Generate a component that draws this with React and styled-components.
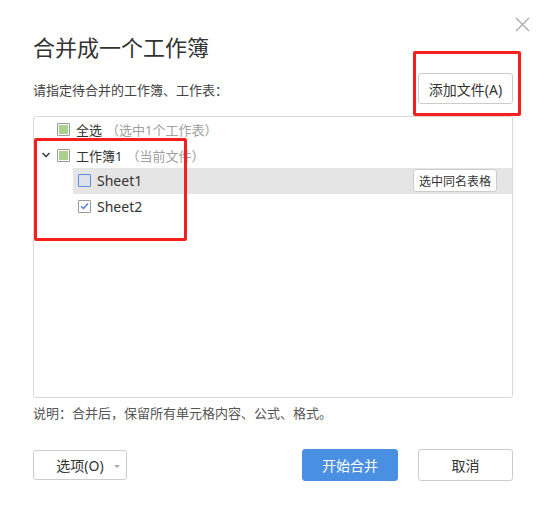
import React from 'react';
import styled, {createGlobalStyle} from 'styled-components';

const GlobalStyle = createGlobalStyle`
    html, body {
        margin: 0;
        padding: 0;
        background: #fff;
    }
    body {
        font-family: "Noto Sans", "Noto Sans CJK SC", sans-serif;
        color: #333;
    }
`;

const Dialog = styled.div`
    position: relative;
    width: 546px;
    height: 513px;
    box-sizing: border-box;
    padding: 32px 33px 0 33px;
    background: #fff;
    display: flex;
    flex-direction: column;
`;

const Close = styled.button`
    position: absolute;
    top: 16px;
    right: 16px;
    width: 16px;
    height: 16px;
    padding: 0;
    border: none;
    background: none;
    display: flex;
    align-items: center;
    justify-content: center;
`;

const Title = styled.h1`
    margin: 0;
    font-size: 22px;
    font-weight: 400;
    line-height: 30px;
    color: #333;
`;

const HeaderRow = styled.div`
    margin-top: 11px;
    height: 31px;
    display: flex;
    align-items: center;
    justify-content: space-between;
`;

const Hint = styled.span`
    font-size: 13px;
    color: #444;
    margin-top: 2px;
`;

const Button = styled.button`
    box-sizing: border-box;
    height: ${p => p.$h || 32}px;
    width: ${p => p.$w}px;
    padding: 0;
    font-family: inherit;
    font-size: ${p => p.$size || 14}px;
    color: ${p => p.$primary ? '#fff' : '#333'};
    background: ${p => p.$primary ? '#4a90e2' : '#fff'};
    border: 1px solid ${p => p.$primary ? '#4a90e2' : '#ccc'};
    border-radius: 3px;
    display: flex;
    align-items: center;
    justify-content: center;
    position: relative;
`;

const Tree = styled.div`
    margin-top: 12px;
    height: 282px;
    box-sizing: border-box;
    border: 1px solid #d9d9d9;
    border-radius: 3px;
    display: flex;
    flex-direction: column;
`;

const Row = styled.div`
    height: 25.5px;
    flex-shrink: 0;
    display: flex;
    align-items: center;
    gap: 6px;
    font-size: 13px;
    color: #333;
    padding-left: ${p => p.$indent}px;
    margin-left: ${p => p.$offset || 0}px;
    background: ${p => p.$active ? '#e5e5e5' : 'transparent'};
    padding-right: 15px;
`;

const Toggle = styled.span`
    width: 23px;
    margin-right: -6px;
    display: flex;
    align-items: center;
    justify-content: center;
`;

const Box = styled.span`
    width: 13px;
    height: 13px;
    box-sizing: border-box;
    border: 1px solid ${p => p.$focus ? '#5b8de0' : '#9a9a9a'};
    background: ${p => p.$focus ? '#dde2ea' : '#fff'};
    border-radius: 1px;
    display: flex;
    align-items: center;
    justify-content: center;
    flex-shrink: 0;
`;

const Fill = styled.span`
    width: 9px;
    height: 9px;
    background: #a9d18e;
`;

const Muted = styled.span`
    color: #a0a0a0;
    margin-left: 4px;
`;

const SheetName = styled.span`
    font-size: 14px;
    flex: 1;
`;

const Note = styled.p`
    margin: 6px 0 0 0;
    font-size: 13px;
    line-height: 18px;
    color: #555;
`;

const Footer = styled.div`
    margin-top: 27px;
    display: flex;
    align-items: center;
    gap: 20px;
`;

const Spacer = styled.div`
    flex: 1;
`;

const Caret = styled.span`
    position: absolute;
    right: 6px;
    top: 14px;
    width: 0;
    height: 0;
    border-left: 3px solid transparent;
    border-right: 3px solid transparent;
    border-top: 3px solid #aaa;
`;

const Mark = styled.div`
    position: absolute;
    left: ${p => p.$x}px;
    top: ${p => p.$y}px;
    width: ${p => p.$w}px;
    height: ${p => p.$h}px;
    box-sizing: border-box;
    border: 3px solid #f5201c;
    border-radius: 2px;
    pointer-events: none;
`;

const Check = ({state, focus}) => (
    <Box $focus={focus}>
        {state === 'partial' && <Fill/>}
        {state === 'checked' && (
            <svg width="9" height="8" viewBox="0 0 9 8">
                <path d="M1 4.2 L3.5 6.5 L8 1.5" fill="none" stroke="#4a7fd4" strokeWidth="1.4"/>
            </svg>
        )}
    </Box>
);

const sheets = [
    {name: 'Sheet1', state: 'none', active: true},
    {name: 'Sheet2', state: 'checked', active: false},
];

const App = () => {
    return (
        <Dialog>
            <GlobalStyle/>
            <Close aria-label="close">
                <svg width="15" height="15" viewBox="0 0 15 15">
                    <path d="M1 1 L14 14 M14 1 L1 14" stroke="#a8a8a8" strokeWidth="1.2"/>
                </svg>
            </Close>
            <Title>合并成一个工作簿</Title>
            <HeaderRow>
                <Hint>请指定待合并的工作簿、工作表：</Hint>
                <Button $w={95} $h={31}>添加文件(A)</Button>
            </HeaderRow>
            <Tree>
                <Row $indent={23}>
                    <Check state="partial"/>
                    <span>全选<Muted>（选中1个工作表）</Muted></span>
                </Row>
                <Row $indent={0}>
                    <Toggle>
                        <svg width="10" height="6" viewBox="0 0 10 6">
                            <path d="M1.5 1 L5 4.5 L8.5 1" fill="none" stroke="#444" strokeWidth="1.6"/>
                        </svg>
                    </Toggle>
                    <Check state="partial"/>
                    <span>工作簿1<Muted>（当前文件）</Muted></span>
                </Row>
                {sheets.map(s => (
                    <Row key={s.name} $offset={39} $indent={5} $active={s.active}>
                        <Check state={s.state} focus={s.active}/>
                        <SheetName>{s.name}</SheetName>
                        {s.active && <Button $w={84} $h={23} $size={12}>选中同名表格</Button>}
                    </Row>
                ))}
            </Tree>
            <Note>说明：合并后，保留所有单元格内容、公式、格式。</Note>
            <Footer>
                <Button $w={94} $h={30}>选项(O)<Caret/></Button>
                <Spacer/>
                <Button $w={96} $primary>开始合并</Button>
                <Button $w={95}>取消</Button>
            </Footer>
            <Mark $x={413} $y={51} $w={108} $h={65}/>
            <Mark $x={34} $y={138} $w={153} $h={103}/>
        </Dialog>
    );
};

export default App;
